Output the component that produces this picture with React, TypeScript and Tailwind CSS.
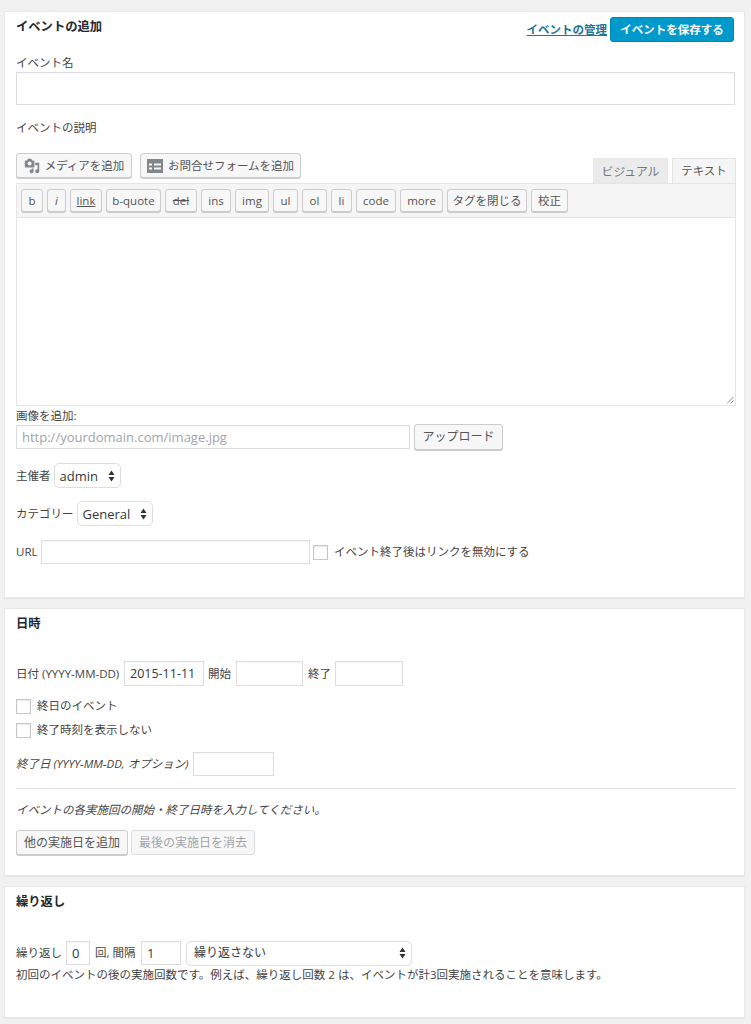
const font = `font-['Open_Sans','Noto_Sans_CJK_JP',sans-serif]`;

const quicktags = [
  { label: "b", cls: "w-[22px]" },
  { label: "i", cls: "w-[19px] italic" },
  { label: "link", cls: "w-[32px] underline" },
  { label: "b-quote", cls: "w-[55px]" },
  { label: "del", cls: "w-[32px] line-through" },
  { label: "ins", cls: "w-[30px]" },
  { label: "img", cls: "w-[34px]" },
  { label: "ul", cls: "w-[25px]" },
  { label: "ol", cls: "w-[25px]" },
  { label: "li", cls: "w-[21px]" },
  { label: "code", cls: "w-[40px]" },
  { label: "more", cls: "w-[43px]" },
  { label: "タグを閉じる", cls: "w-[80px]" },
  { label: "校正", cls: "w-[37px]" },
];

function Card({ title, className, children }: { title: string; className: string; children: React.ReactNode }) {
  return (
    <section className={`ml-[4px] mr-[6px] bg-white border border-[#e8e8e8] shadow-[0_1px_1px_rgba(0,0,0,0.04)] pl-[11px] pr-[9px] ${className}`}>
      <h2 className="pt-[5px] text-[12.3px] leading-[20px] font-bold text-[#23282d]">{title}</h2>
      {children}
    </section>
  );
}

function Button({ className = "", children }: { className?: string; children: React.ReactNode }) {
  return (
    <div className={`flex items-center justify-center rounded-[3px] border border-[#cccccc] bg-[#f7f7f7] shadow-[0_1px_0_#cccccc] text-[#555555] whitespace-nowrap ${className}`}>
      {children}
    </div>
  );
}

function Field({ className = "", value, placeholder }: { className?: string; value?: string; placeholder?: string }) {
  return (
    <input
      readOnly
      value={value ?? ""}
      placeholder={placeholder}
      className={`block shrink-0 bg-white border border-[#dddddd] shadow-[inset_0_1px_2px_rgba(0,0,0,0.04)] text-[#32373c] outline-none placeholder:text-[#a0a5aa] ${className}`}
    />
  );
}

function Check({ label, className = "" }: { label: string; className?: string }) {
  return (
    <div className={`flex items-center ${className}`}>
      <span className="block w-[15px] h-[15px] shrink-0 bg-white border border-[#c8c8c8] shadow-[inset_0_1px_2px_rgba(0,0,0,0.1)]" />
      <span className="ml-[6px] whitespace-nowrap">{label}</span>
    </div>
  );
}

function Select({ label, className = "" }: { label: string; className?: string }) {
  return (
    <div className={`flex items-center justify-between shrink-0 h-[25px] bg-white rounded-[5px] border border-[#dddddd] pl-[5px] pr-[5px] text-[13px] text-[#32373c] ${className}`}>
      <span className="whitespace-nowrap">{label}</span>
      <svg width="7" height="12" viewBox="0 0 7 12" className="fill-[#333333]">
        <path d="M3.5 0.5 L6.5 5 H0.5 Z M0.5 7 H6.5 L3.5 11.5 Z" />
      </svg>
    </div>
  );
}

export default function App() {
  return (
    <div className={`h-[1024px] w-[751px] overflow-hidden bg-[#f1f1f1] pt-[11px] text-[11.5px] leading-[16px] text-[#444444] ${font}`}>
      {/* イベントの追加 */}
      <Card title="イベントの追加" className="h-[587px] relative">
        <div className="absolute right-[10px] top-[5px] flex items-center gap-[3px]">
          <a className="text-[11.5px] font-bold underline text-[#21759b]">イベントの管理</a>
          <div className="flex items-center justify-center w-[124px] h-[25px] rounded-[3px] bg-[#0099cc] border border-[#0085b3] text-white font-bold text-[11.5px]">イベントを保存する</div>
        </div>

        <div className="mt-[18px]">イベント名</div>
        <Field className="mt-[1px] w-[719px] h-[33px]" />
        <div className="mt-[15px]">イベントの説明</div>

        <div className="mt-[17px] flex items-start justify-between w-[720px]">
          <div className="flex gap-[8px]">
            <Button className="w-[116px] h-[25px] gap-[5px]">
              <svg width="16" height="16" viewBox="0 0 20 20" className="fill-[#82878c]">
                <path d="M13 11V4c0-.55-.45-1-1-1h-1.67L9 1H5L3.67 3H2c-.55 0-1 .45-1 1v7c0 .55.45 1 1 1h10c.55 0 1-.45 1-1zM7 4.5c1.38 0 2.5 1.12 2.5 2.5S8.38 9.5 7 9.5 4.5 8.38 4.5 7 5.62 4.5 7 4.5zM14 6h5v10.5c0 1.38-1.12 2.5-2.5 2.5S14 17.88 14 16.5s1.12-2.5 2.5-2.5c.17 0 .34.02.5.05V9h-3V6zm-4 8.05V13h2v3.5c0 1.38-1.12 2.5-2.5 2.5S7 17.88 7 16.5 8.12 14 9.5 14c.17 0 .34.02.5.05z" />
              </svg>
              メディアを追加
            </Button>
            <Button className="w-[161px] h-[25px] gap-[5px]">
              <svg width="16" height="14" viewBox="0 0 16 14" className="fill-[#82878c]">
                <path fillRule="evenodd" d="M0 0 H16 V14 H0 Z M2 4.5 V6.5 H5 V4.5 Z M7 4.5 V6.5 H14 V4.5 Z M2 8.5 V10.5 H5 V8.5 Z M7 8.5 V10.5 H14 V8.5 Z" />
              </svg>
              お問合せフォームを追加
            </Button>
          </div>
          <div className="flex gap-[4px] pt-[5px]">
            <div className="flex items-center justify-center w-[75px] h-[25px] bg-[#ebebeb] border border-[#e8e8e8] text-[#777777] text-[11.8px]">ビジュアル</div>
            <div className="flex items-center justify-center w-[64px] h-[25px] bg-[#f5f5f5] border border-[#e5e5e5] border-b-0 text-[#555555] text-[11.5px]">テキスト</div>
          </div>
        </div>

        <div className="w-[720px] border border-[#e5e5e5]">
          <div className="flex gap-[4px] h-[34px] items-center pl-[4px] bg-[#f5f5f5] border-b border-[#e5e5e5]">
            {quicktags.map((tag) => (
              <Button key={tag.label} className={`h-[23px] text-[11.5px] ${tag.cls}`}>
                {tag.label}
              </Button>
            ))}
          </div>
          <div className="relative h-[187px] bg-white">
            <svg width="8" height="8" viewBox="0 0 8 8" className="absolute right-[1px] bottom-[1px] stroke-[#888888]">
              <path d="M7.5 1 L1 7.5 M7.5 4.5 L4.5 7.5" />
            </svg>
          </div>
        </div>

        <div className="mt-[2px]">画像を追加:</div>
        <div className="flex items-start gap-[4px]">
          <Field className="w-[394px] h-[24px] mt-[1px] px-[5px] text-[13px]" placeholder="http://yourdomain.com/image.jpg" />
          <Button className="w-[89px] h-[26px] text-[12px]">アップロード</Button>
        </div>

        <div className="flex items-center gap-[3px] mt-[13px]">
          <span>主催者</span>
          <Select label="admin" className="w-[67px]" />
        </div>
        <div className="flex items-center gap-[3px] mt-[13px]">
          <span>カテゴリー</span>
          <Select label="General" className="w-[76px]" />
        </div>
        <div className="flex items-center mt-[14px]">
          <span className="w-[25px]">URL</span>
          <Field className="w-[269px] h-[24px]" />
          <Check label="イベント終了後はリンクを無効にする" className="ml-[3px]" />
        </div>
      </Card>

      {/* 日時 */}
      <Card title="日時" className="h-[268px] mt-[10px]">
        <div className="flex items-center mt-[27px]">
          <span className="whitespace-nowrap w-[108px]">日付 (YYYY-MM-DD)</span>
          <Field className="w-[80px] h-[25px] px-[5px] text-[12.5px]" value="2015-11-11" />
          <span className="ml-[4px] w-[28px]">開始</span>
          <Field className="w-[67px] h-[25px]" />
          <span className="ml-[5px] w-[27px]">終了</span>
          <Field className="w-[68px] h-[25px]" />
        </div>
        <Check label="終日のイベント" className="mt-[12px]" />
        <Check label="終了時刻を表示しない" className="mt-[8px]" />
        <div className="flex items-center mt-[14px]">
          <i className="whitespace-nowrap w-[177px]">終了日 (YYYY-MM-DD, オプション)</i>
          <Field className="w-[81px] h-[24px]" />
        </div>
        <hr className="w-[720px] mt-[12px] border-t border-[#e0e0e0]" />
        <i className="block mt-[13px]">イベントの各実施回の開始・終了日時を入力してください。</i>
        <div className="flex gap-[3px] mt-[12px]">
          <Button className="w-[112px] h-[25px] text-[12px]">他の実施日を追加</Button>
          <Button className="w-[124px] h-[25px] text-[12px] !text-[#a0a5aa] !shadow-none !border-[#dddddd]">最後の実施日を消去</Button>
        </div>
      </Card>

      {/* 繰り返し */}
      <Card title="繰り返し" className="h-[132px] mt-[10px]">
        <div className="flex items-center mt-[28px] h-[26px]">
          <span className="w-[50px]">繰り返し</span>
          <Field className="w-[24px] h-[24px] px-[5px] text-[13px]" value="0" />
          <span className="ml-[5px] w-[46px] whitespace-nowrap">回, 間隔</span>
          <Field className="w-[40px] h-[24px] px-[5px] text-[13px]" value="1" />
          <Select label="繰り返さない" className="w-[226px] ml-[5px] !pl-[7px] !text-[12px]" />
        </div>
        <div className="mt-[1px] whitespace-nowrap">初回のイベントの後の実施回数です。例えば、繰り返し回数 2 は、イベントが計3回実施されることを意味します。</div>
      </Card>
    </div>
  );
}
